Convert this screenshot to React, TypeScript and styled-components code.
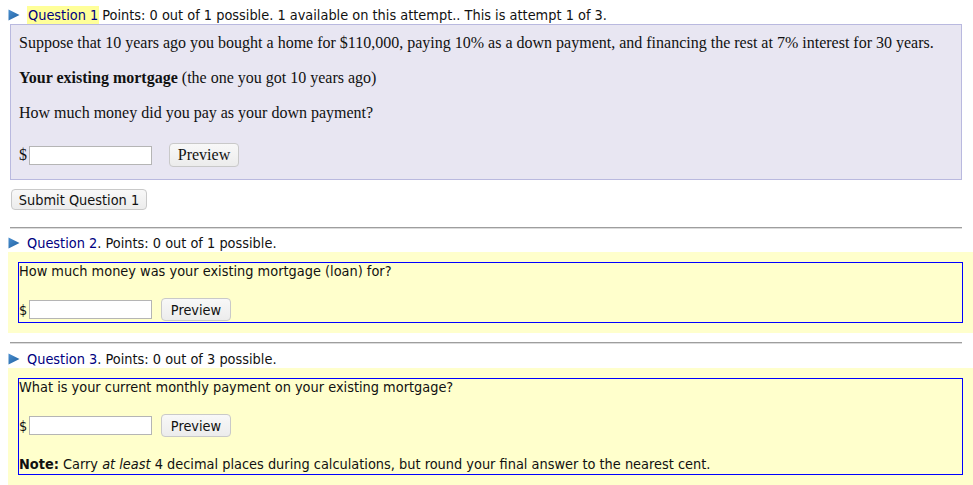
import React from "react";
import styled, { createGlobalStyle } from "styled-components";

const GlobalStyle = createGlobalStyle`
  html, body { margin: 0; padding: 0; background: #ffffff; }
  body { font-family: "DejaVu Sans Condensed", "DejaVu Sans", sans-serif; font-size: 14.4px; color: #111; }
`;

const sans = `"DejaVu Sans Condensed", "DejaVu Sans", sans-serif`;
const serif = `"Liberation Serif", "Times New Roman", serif`;

const Page = styled.div`
  width: 973px;
  height: 485px;
  overflow: hidden;
  display: flex;
  flex-direction: column;
  & > * { flex: none; }
`;

const Header = styled.div<{ $top: number }>`
  display: flex;
  align-items: center;
  height: 18px;
  margin-top: ${(p) => p.$top}px;
  padding-left: 8px;
  font-family: ${sans};
  font-size: 14.4px;
  color: #111;
  white-space: nowrap;
`;

const Arrow = styled.svg`
  width: 12px;
  height: 12px;
  margin-right: 7px;
  flex: none;
`;

const QLink = styled.span<{ $hl?: boolean }>`
  color: #000080;
  background: ${(p) => (p.$hl ? "#ffff99" : "transparent")};
  padding: ${(p) => (p.$hl ? "1px 1px" : "0")};
  margin-right: ${(p) => (p.$hl ? "3px" : "0")};
`;

const LavenderBox = styled.div`
  margin: 0 0 0 10px;
  width: 952px;
  box-sizing: border-box;
  border: 1px solid #b9b9df;
  background: #e8e6f2;
  padding: 8px 8px 12px 8px;
  font-family: ${serif};
  font-size: 16px;
  color: #111;
`;

const SerifPara = styled.p`
  margin: 0 0 16px 0;
  line-height: 19px;
`;

const AnswerRow = styled.div<{ $gap: number; $top?: number; $h: number }>`
  display: flex;
  align-items: center;
  height: ${(p) => p.$h}px;
  margin-top: ${(p) => p.$top ?? 0}px;
  & > button { margin-left: ${(p) => p.$gap}px; }
`;

const Dollar = styled.span`
  width: 10px;
`;

const TextInput = styled.input`
  box-sizing: border-box;
  width: 123px;
  height: 19px;
  border: 1px solid #b5b5b5;
  background: #fff;
  padding: 0 2px;
  margin: 0;
  outline: none;
`;

const Btn = styled.button<{ $serif?: boolean; $w: number; $h: number }>`
  box-sizing: border-box;
  width: ${(p) => p.$w}px;
  height: ${(p) => p.$h}px;
  padding: 0;
  border: 1px solid #c9c9c9;
  border-radius: 4px;
  background: linear-gradient(#f8f8f8, #ececec);
  color: #111;
  font-family: ${(p) => (p.$serif ? serif : sans)};
  font-size: ${(p) => (p.$serif ? 16 : 14.4)}px;
  cursor: pointer;
`;

const SubmitWrap = styled.div`
  margin: 9px 0 0 11px;
  display: flex;
`;

const Rule = styled.div<{ $top: number }>`
  margin: ${(p) => p.$top}px 0 0 10px;
  width: 952px;
  height: 1px;
  background: #9e9e9e;
  border-bottom: 1px solid #dcdcdc;
`;

const YellowBand = styled.div<{ $h: number }>`
  margin: 0 0 0 8px;
  width: 970px;
  height: ${(p) => p.$h}px;
  box-sizing: border-box;
  background: #ffffcc;
  padding: 10px 0 0 10px;
`;

const BlueBox = styled.div`
  width: 945px;
  box-sizing: border-box;
  border: 1px solid #0000ff;
  font-family: ${sans};
  font-size: 14.4px;
  color: #111;
  padding: 0 0 1px 0;
`;

const SansLine = styled.div<{ $top?: number }>`
  line-height: 17px;
  margin-top: ${(p) => p.$top ?? 0}px;
  white-space: nowrap;
`;

const TriangleIcon = () => (
  <Arrow viewBox="0 0 12 12">
    <defs>
      <linearGradient id="tri" x1="0" y1="0" x2="1" y2="1">
        <stop offset="0" stopColor="#4a8fd0" />
        <stop offset="1" stopColor="#1f5f9e" />
      </linearGradient>
    </defs>
    <polygon points="0.5,0.5 11.5,6 0.5,11.5" fill="url(#tri)" />
  </Arrow>
);

export default function App() {
  return (
    <Page>
      <GlobalStyle />
      <Header $top={6}>
        <TriangleIcon />
        <QLink $hl>Question 1</QLink>
        Points: 0 out of 1 possible. 1 available on this attempt.. This is attempt 1 of 3.
      </Header>
      <LavenderBox>
        <SerifPara>
          Suppose that 10 years ago you bought a home for $110,000, paying 10% as a down payment, and
          financing the rest at 7% interest for 30 years.
        </SerifPara>
        <SerifPara>
          <b>Your existing mortgage</b> (the one you got 10 years ago)
        </SerifPara>
        <SerifPara>How much money did you pay as your down payment?</SerifPara>
        <AnswerRow $gap={17} $top={21} $h={24}>
          <Dollar>$</Dollar>
          <TextInput type="text" />
          <Btn $serif $w={70} $h={24}>Preview</Btn>
        </AnswerRow>
      </LavenderBox>
      <SubmitWrap>
        <Btn $w={136} $h={21}>Submit Question 1</Btn>
      </SubmitWrap>
      <Rule $top={17} />
      <Header $top={5}>
        <TriangleIcon />
        <QLink>Question 2</QLink>. Points: 0 out of 1 possible.
      </Header>
      <YellowBand $h={81}>
        <BlueBox>
          <SansLine>How much money was your existing mortgage (loan) for?</SansLine>
          <AnswerRow $gap={9} $top={18} $h={23}>
            <Dollar>$</Dollar>
            <TextInput type="text" />
            <Btn $w={70} $h={23}>Preview</Btn>
          </AnswerRow>
        </BlueBox>
      </YellowBand>
      <Rule $top={9} />
      <Header $top={6}>
        <TriangleIcon />
        <QLink>Question 3</QLink>. Points: 0 out of 3 possible.
      </Header>
      <YellowBand $h={130}>
        <BlueBox>
          <SansLine>What is your current monthly payment on your existing mortgage?</SansLine>
          <AnswerRow $gap={9} $top={18} $h={23}>
            <Dollar>$</Dollar>
            <TextInput type="text" />
            <Btn $w={70} $h={23}>Preview</Btn>
          </AnswerRow>
          <SansLine $top={19}>
            <b>Note:</b> Carry <i>at least</i> 4 decimal places during calculations, but round your final
            answer to the nearest cent.
          </SansLine>
        </BlueBox>
      </YellowBand>
    </Page>
  );
}
